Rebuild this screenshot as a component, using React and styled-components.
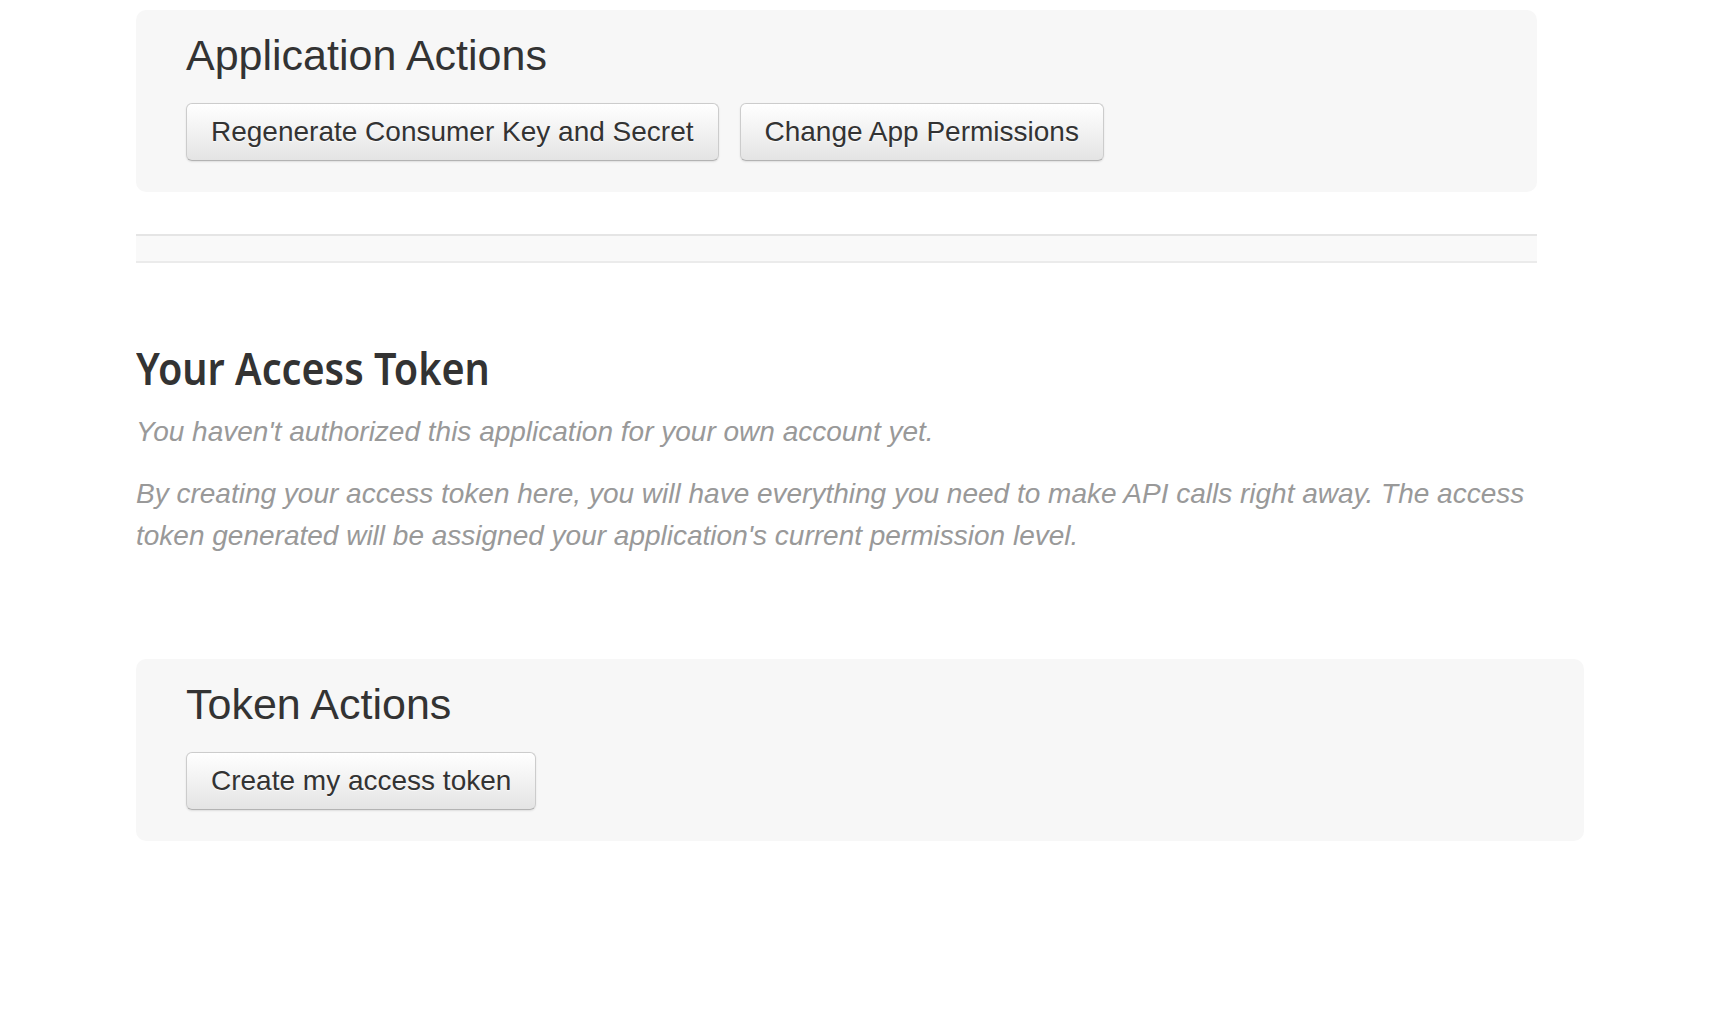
import React from "react";
import styled, { createGlobalStyle } from "styled-components";

const GlobalStyle = createGlobalStyle`
  html, body {
    margin: 0;
    padding: 0;
    background: #ffffff;
  }
  body {
    font-family: "Liberation Sans", Arial, Helvetica, sans-serif;
    color: #333333;
  }
`;

const Page = styled.main`
  padding: 10px 0 120px 136px;
`;

const Column = styled.div`
  width: 1401px;
`;

const Well = styled.section`
  box-sizing: border-box;
  width: ${(p) => (p.$wide ? "1448px" : "100%")};
  background: #f7f7f7;
  border-radius: 10px;
  padding: 20px 50px 31px;
`;

const WellTitle = styled.h3`
  margin: 0 0 23px;
  font-size: 43px;
  line-height: 50px;
  font-weight: 400;
  color: #333333;
`;

const ButtonRow = styled.div`
  display: flex;
  gap: 21px;
`;

const Button = styled.button`
  font-family: "Liberation Sans", Arial, Helvetica, sans-serif;
  font-size: 28px;
  line-height: 40px;
  padding: 8px 24px;
  color: #333333;
  text-shadow: 0 1px 1px rgba(255, 255, 255, 0.75);
  background: linear-gradient(to bottom, #ffffff, #e4e4e4);
  border: 1px solid #cccccc;
  border-bottom-color: #b3b3b3;
  border-radius: 6px;
  box-shadow: inset 0 1px 0 rgba(255, 255, 255, 0.2), 0 1px 2px rgba(0, 0, 0, 0.1);
  cursor: pointer;
`;

const Divider = styled.div`
  margin-top: 42px;
  height: 25px;
  background: #f9f9f9;
  border-top: 2px solid #e5e5e5;
  border-bottom: 2px solid #ebebeb;
`;

const TokenSection = styled.section`
  padding-top: 80px;
  margin-bottom: 102px;
`;

const SectionTitle = styled.h2`
  margin: 0 0 18px;
  font-family: "Noto Sans", "Open Sans", sans-serif;
  font-weight: 600;
  font-size: 45px;
  line-height: 50px;
  color: #333333;
  transform: scaleX(0.88);
  transform-origin: left center;
`;

const Note = styled.p`
  margin: 0 0 20px;
  font-size: 28px;
  line-height: 42px;
  font-style: italic;
  color: #999999;
  &:last-child {
    margin-bottom: 0;
  }
`;

export default function App() {
  return (
    <>
      <GlobalStyle />
      <Page>
        <Column>
          <Well>
            <WellTitle>Application Actions</WellTitle>
            <ButtonRow>
              <Button>Regenerate Consumer Key and Secret</Button>
              <Button>Change App Permissions</Button>
            </ButtonRow>
          </Well>
          <Divider />
          <TokenSection>
            <SectionTitle>Your Access Token</SectionTitle>
            <Note>You haven't authorized this application for your own account yet.</Note>
            <Note>
              By creating your access token here, you will have everything you need to make API
              calls right away. The access token generated will be assigned your application's
              current permission level.
            </Note>
          </TokenSection>
          <Well $wide>
            <WellTitle>Token Actions</WellTitle>
            <ButtonRow>
              <Button>Create my access token</Button>
            </ButtonRow>
          </Well>
        </Column>
      </Page>
    </>
  );
}
